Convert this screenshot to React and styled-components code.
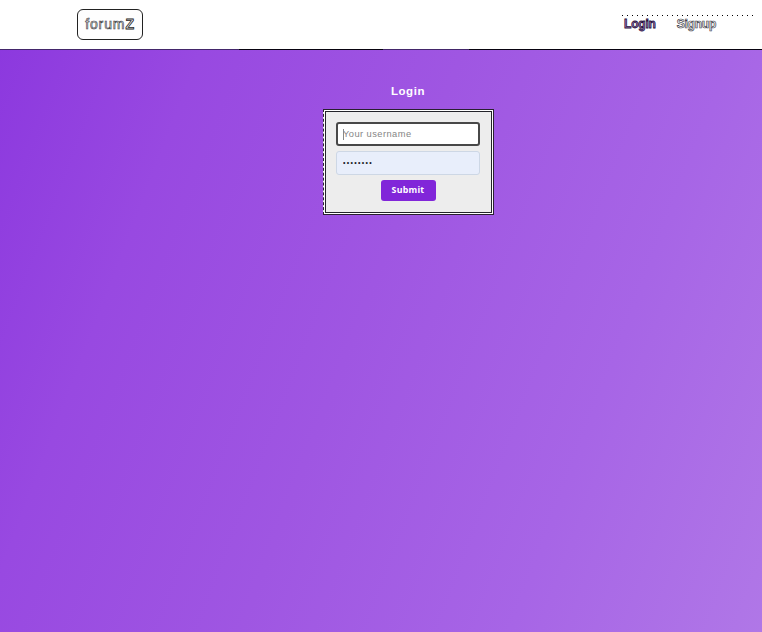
import React from "react";
import styled, { createGlobalStyle } from "styled-components";

const GlobalStyle = createGlobalStyle`
  * { box-sizing: border-box; }
  body { margin: 0; font-family: "Liberation Sans", Arial, sans-serif; }
`;

const Page = styled.div`
  height: 632px;
  display: flex;
  flex-direction: column;
  overflow: hidden;
  background: linear-gradient(111deg, #8b37de 0%, #9849e1 22%, #9f56e2 48%, #a765e6 75%, #b077e7 100%);
`;

const Header = styled.header`
  flex: none;
  height: 50px;
  display: flex;
  align-items: flex-start;
  justify-content: space-between;
  padding: 9px 6px 0 77px;
  background: linear-gradient(90deg, #43266b 0 239px, #080310 239px 383px, #43266b 383px 469px, #080310 469px)
    0 100% / 100% 1px no-repeat #fff;
`;

const Logo = styled.a`
  width: 66px;
  height: 31px;
  border: 1px solid #222;
  border-radius: 6px;
  color: #fff;
  background: #fefefe;
  font-size: 14px;
  line-height: 28px;
  text-align: center;
  letter-spacing: 0.9px;
  -webkit-text-stroke: 0.65px #3c3c43;
  b { font-weight: 700; -webkit-text-stroke: 0.8px #222; }
`;

const Nav = styled.nav`
  display: flex;
  gap: 21px;
  width: 134px;
  margin-top: 6px;
  padding: 3px 0 0 2px;
  background: radial-gradient(circle at 0.5px 0.5px, #000 0.6px, transparent 0.7px) 0 0 / 5px 20px repeat-x;
`;

const NavLink = styled.a`
  font-size: 12px;
  line-height: 13px;
  font-weight: 700;
  letter-spacing: -0.2px;
  color: ${({ $active }) => ($active ? "#a37abd" : "#fff")};
  -webkit-text-stroke: ${({ $active }) => ($active ? "0.8px #28133e" : "0.7px #44424a")};
`;

const Main = styled.main`
  display: flex;
  flex-direction: column;
  align-items: center;
  padding-left: 54px;
`;

const Title = styled.h1`
  margin: 33px 0 0;
  height: 26px;
  font-size: 11.5px;
  line-height: 16px;
  letter-spacing: 0.55px;
  color: #fff;
`;

const Form = styled.form`
  width: 171px;
  height: 106px;
  display: flex;
  flex-direction: column;
  align-items: center;
  padding: 11px 10px 0;
  border: 1px solid #29202f;
  border-left-style: dashed;
  outline: 1px solid #24242a;
  outline-offset: -3px;
  box-shadow: inset 0 0 0 1px #fff;
  background: #ededed;
`;

const Field = styled.label`
  display: flex;
  align-items: center;
  flex: none;
  width: 144px;
  height: 24px;
  margin: 1px 0 5px;
  padding-left: ${({ $focused }) => ($focused ? "5px" : "6px")};
  border: ${({ $focused }) => ($focused ? "2px solid #484848" : "1px solid #cdd7e5")};
  border-radius: 3px;
  background: ${({ $focused }) => ($focused ? "#fff" : "#e8eefb")};
  & + & { margin: 0 0 5px; }
`;

const Caret = styled.i`
  width: 1px;
  height: 11px;
  margin-right: -1px;
  background: #888;
`;

const Input = styled.input`
  width: 130px;
  height: 19px;
  border: 0;
  padding: 0 0 1px;
  outline: 0;
  background: transparent;
  color: #171821;
  font-family: "Liberation Sans", Arial, sans-serif;
  font-size: ${({ type }) => (type === "password" ? "7px" : "9.3px")};
  letter-spacing: ${({ type }) => (type === "password" ? "1.3px" : "0.45px")};
  &::placeholder { color: #858585; opacity: 1; }
`;

const Submit = styled.button`
  width: 55px;
  height: 21px;
  flex: none;
  border: 0;
  border-radius: 3px;
  padding: 0;
  background: #8126d9;
  color: #fff;
  font: 700 8.8px/21px "Open Sans", sans-serif;
  letter-spacing: 0.25px;
`;

export default function App() {
  return (
    <Page>
      <GlobalStyle />
      <Header>
        <Logo>forum<b>Z</b></Logo>
        <Nav>
          <NavLink $active>Login</NavLink>
          <NavLink>Signup</NavLink>
        </Nav>
      </Header>
      <Main>
        <Title>Login</Title>
        <Form>
          <Field $focused>
            <Caret />
            <Input type="text" placeholder="Your username" />
          </Field>
          <Field>
            <Input type="password" defaultValue="password" />
          </Field>
          <Submit type="button">Submit</Submit>
        </Form>
      </Main>
    </Page>
  );
}
